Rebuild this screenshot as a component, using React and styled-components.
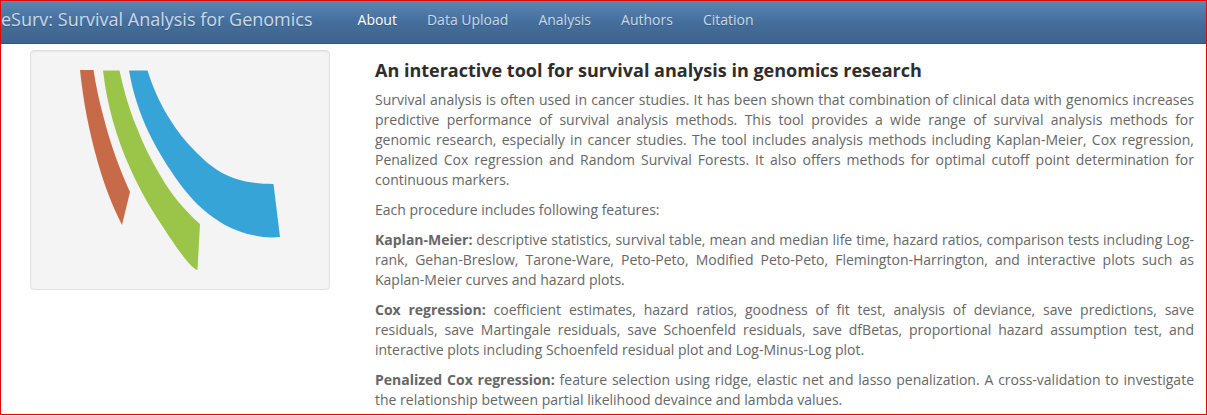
import { useState } from "react";
import styled, { createGlobalStyle } from "styled-components";

const GlobalStyle = createGlobalStyle`
    * {
        box-sizing: border-box;
    }
    body {
        margin: 0;
        background-color: #fff;
        color: #666;
        font-family: "Open Sans", "Noto Sans", sans-serif;
        font-size: 14px;
        line-height: 20px;
    }
`;

const Page = styled.div`
    min-height: 100vh;
    border: 1px solid #e00808;
`;

const Navbar = styled.header`
    display: flex;
    flex-wrap: wrap;
    align-items: flex-start;
    gap: 30px;
    min-height: 43px;
    border-bottom: 1px solid #345578;
    background-image: linear-gradient(to bottom, #5b85b5, #446e9b 50%, #3e648d);
`;

const Brand = styled.a`
    padding: 8px 0;
    color: #cbd9e8;
    font-size: 18px;
    text-decoration: none;
    text-shadow: 0 1px 0 rgba(0, 0, 0, 0.2);
`;

const NavLinks = styled.nav`
    display: flex;
    flex-wrap: wrap;
`;

const NavLink = styled.a`
    padding: 9px 15px;
    color: ${(props) => (props.$active ? "#fff" : "#cbd9e8")};
    text-decoration: none;
    text-shadow: 0 1px 0 rgba(0, 0, 0, 0.2);
    &:hover {
        color: #fff;
    }
`;

const Content = styled.div`
    display: flex;
    align-items: flex-start;
    gap: 45px;
    padding: 6px 12px 0 29px;
    @media screen and (max-width: 760px) {
        flex-direction: column;
        gap: 16px;
    }
`;

const LogoPanel = styled.aside`
    flex: 0 0 300px;
    border: 1px solid #e0e0e0;
    border-radius: 4px;
    background-color: #f4f4f4;
    box-shadow: inset 0 1px 1px rgba(0, 0, 0, 0.05);
    svg {
        display: block;
        width: 100%;
    }
`;

const About = styled.main`
    flex: 1;
    min-width: 0;
`;

const Title = styled.h1`
    margin: 10px 0;
    color: #2d2d2d;
    font-size: 18px;
    line-height: 20px;
`;

const Text = styled.p`
    margin: 0 0 10px;
    text-align: justify;
    &:last-child {
        margin-bottom: 0;
    }
`;

const tabs = ["About", "Data Upload", "Analysis", "Authors", "Citation"];

const features = [
    {
        name: "Kaplan-Meier:",
        text: "descriptive statistics, survival table, mean and median life time, hazard ratios, comparison tests including Log-rank, Gehan-Breslow, Tarone-Ware, Peto-Peto, Modified Peto-Peto, Flemington-Harrington, and interactive plots such as Kaplan-Meier curves and hazard plots.",
    },
    {
        name: "Cox regression:",
        text: "coefficient estimates, hazard ratios, goodness of fit test, analysis of deviance, save predictions, save residuals, save Martingale residuals, save Schoenfeld residuals, save dfBetas, proportional hazard assumption test, and interactive plots including Schoenfeld residual plot and Log-Minus-Log plot.",
    },
    {
        name: "Penalized Cox regression:",
        text: "feature selection using ridge, elastic net and lasso penalization. A cross-validation to investigate the relationship between partial likelihood devaince and lambda values.",
    },
];

function Logo() {
    return (
        <svg viewBox="1 1 298 238" role="img" aria-label="eSurv logo">
            <path
                fill="#c66a48"
                d="M50 20H63.500C66 36 69 50 73 65C80 93 89 118 100 142L92 175C82 155 75 137 68 113C59 82 53 50 50 20Z"
            />
            <path
                fill="#9bc549"
                d="M73 20.500H89.500C94 41 99 59 107 78C113 94 121 110 130 125C141 144 154 160 170 174L167.500 220C162 219 149 202 133 177C119 156 109 138 100 118C87 89 77 56 73 20.500Z"
            />
            <path
                fill="#37a4d7"
                d="M99 20.500H117.500C123 38 131 56 141 71C148 82 155 91 164 100C184 121 203 134 243.500 134L250 187C230 189 208 183 190 172C174 162 161 149 150 134C127 102 107 67 99 20.500Z"
            />
        </svg>
    );
}

function App() {
    const [active, setActive] = useState("About");

    return (
        <Page>
            <GlobalStyle />
            <Navbar>
                <Brand href="#">eSurv: Survival Analysis for Genomics</Brand>
                <NavLinks>
                    {tabs.map((tab) => (
                        <NavLink key={tab} href="#" $active={tab === active} onClick={() => setActive(tab)}>
                            {tab}
                        </NavLink>
                    ))}
                </NavLinks>
            </Navbar>
            <Content>
                <LogoPanel>
                    <Logo />
                </LogoPanel>
                <About>
                    <Title>An interactive tool for survival analysis in genomics research</Title>
                    <Text>
                        Survival analysis is often used in cancer studies. It has been shown that combination of
                        clinical data with genomics increases predictive performance of survival analysis methods.
                        This tool provides a wide range of survival analysis methods for genomic&nbsp;research,
                        especially in cancer studies. The tool includes analysis methods including Kaplan-Meier, Cox
                        regression, Penalized Cox regression and Random Survival Forests. It also offers methods for
                        optimal cutoff point determination for continuous markers.
                    </Text>
                    <Text>Each procedure includes following features:</Text>
                    {features.map((feature) => (
                        <Text key={feature.name}>
                            <strong>{feature.name}</strong> {feature.text}
                        </Text>
                    ))}
                </About>
            </Content>
        </Page>
    );
}

export default App;
